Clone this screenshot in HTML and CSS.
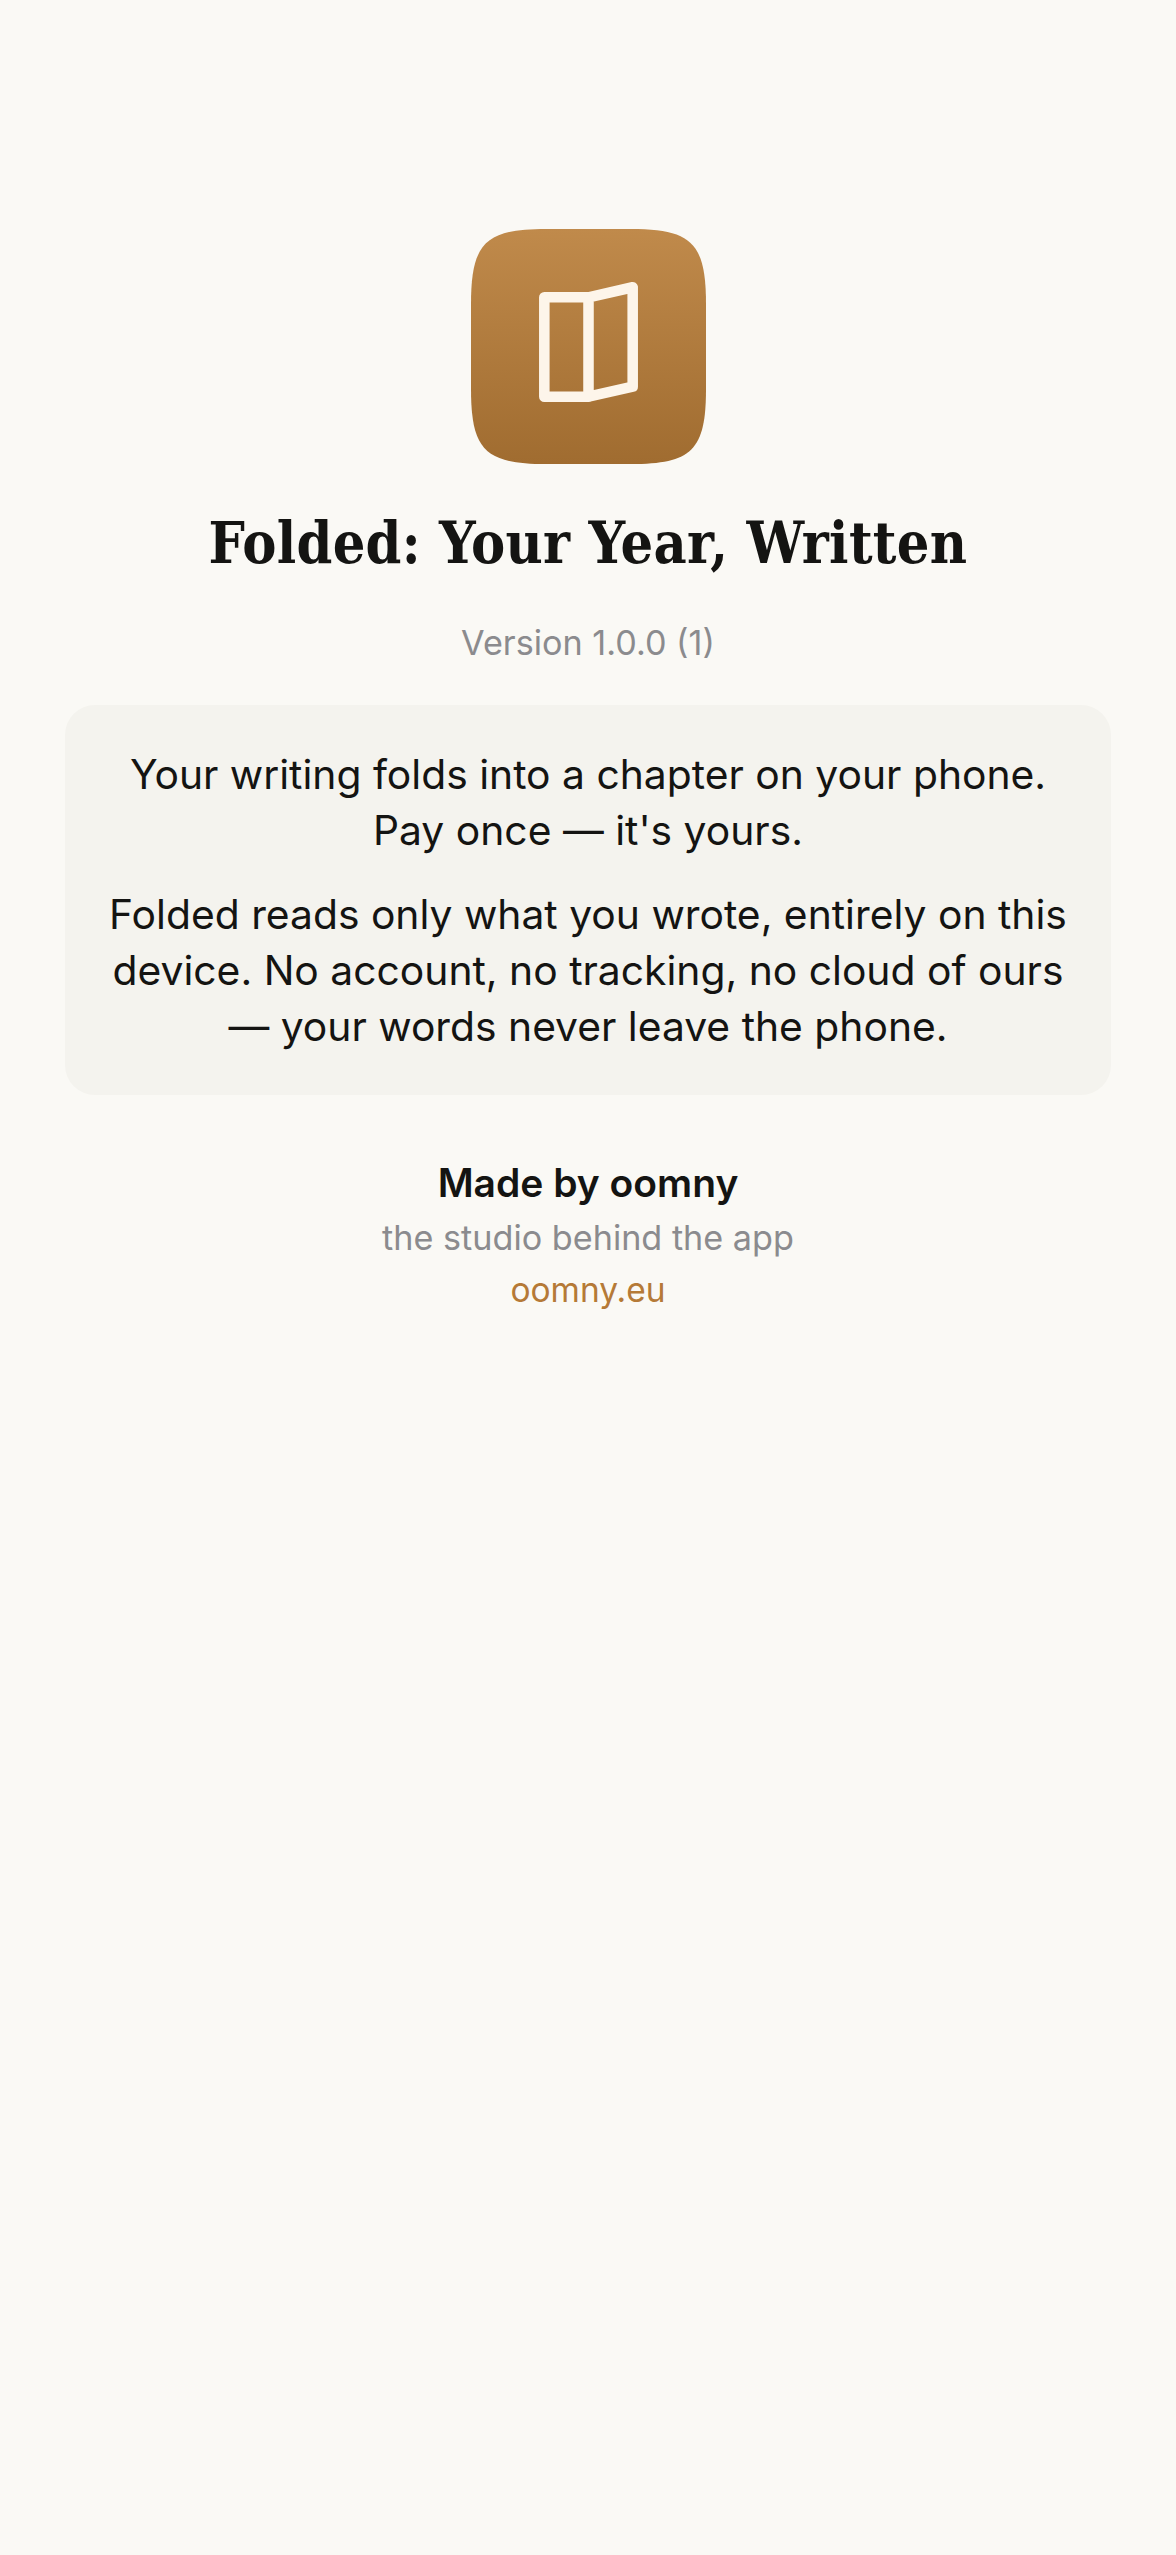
FILE: index.html
```html
<!DOCTYPE html>
<html lang="en">
<head>
    <meta charset="UTF-8">
    <meta name="viewport" content="width=device-width, initial-scale=1.0">
    <title>About Folded</title>
    <link rel="stylesheet" href="styles.css">
</head>
<body>

<main class="about">
    <svg class="appIcon" viewBox="0 0 234 234" width="235" height="235" role="img" aria-label="Folded icon">
        <defs>
            <linearGradient id="iconFill" x1="0" y1="0" x2="0" y2="1">
                <stop offset="0" stop-color="#c08a4b"/>
                <stop offset="1" stop-color="#a06c30"/>
            </linearGradient>
        </defs>
        <path fill="url(#iconFill)" d="M75 0H159C220 0 234 14 234 75V159C234 220 220 234 159 234H75C14 234 0 220 0 159V75C0 14 14 0 75 0Z"/>
        <path fill="none" stroke="#fdf5ea" stroke-width="10.5" stroke-linejoin="round" d="M73 68H117V167H73ZM117 68L161 58V157L117 167"/>
    </svg>

    <h1 class="appName">Folded: Your Year, Written</h1>
    <p class="version">Version 1.0.0 (1)</p>

    <section class="blurb">
        <p>Your writing folds into a chapter on your phone. Pay once — it's yours.</p>
        <p>Folded reads only what you wrote, entirely on this device. No account, no tracking, no cloud of ours — your words never leave the phone.</p>
    </section>

    <footer class="studio">
        <div class="studioName">Made by oomny</div>
        <div class="studioNote">the studio behind the app</div>
        <a class="studioLink" href="#">oomny.eu</a>
    </footer>
</main>

</body>
</html>
```

FILE: styles.css
```css
html, body {
    margin: 0;
    background-color: #faf9f5;
}
body {
    font-family: Inter, "Noto Sans", sans-serif;
    color: #141412;
}
.about {
    display: flex;
    flex-direction: column;
    align-items: center;
    min-height: 2555px;
    box-sizing: border-box;
    padding: 229px 65px 0;
    text-align: center;
}
.appIcon {
    display: block;
}
.appName {
    margin: 43px 0 0;
    font-family: "DejaVu Serif", serif;
    font-stretch: condensed;
    font-size: 57px;
    line-height: 72px;
    font-weight: 700;
    letter-spacing: 0.3px;
}
.version {
    margin: 43px 0 0;
    font-size: 34.2px;
    line-height: 42px;
    color: #8b8b8e;
}
.blurb {
    width: 100%;
    box-sizing: border-box;
    margin-top: 41px;
    padding: 41px 33px;
    background-color: #f4f3ee;
    border-radius: 30px;
    font-size: 40.8px;
    line-height: 56px;
}
.blurb p {
    margin: 0;
}
.blurb p + p {
    margin-top: 28px;
}
.studio {
    display: flex;
    flex-direction: column;
    align-items: center;
    margin-top: 63px;
}
.studioName {
    font-size: 39px;
    line-height: 50px;
    font-weight: 600;
}
.studioNote {
    margin-top: 7px;
    font-size: 34.2px;
    line-height: 46px;
    color: #8b8b8e;
}
.studioLink {
    margin-top: 6px;
    font-size: 33.5px;
    line-height: 46px;
    color: #b57a37;
    text-decoration: none;
}
```
